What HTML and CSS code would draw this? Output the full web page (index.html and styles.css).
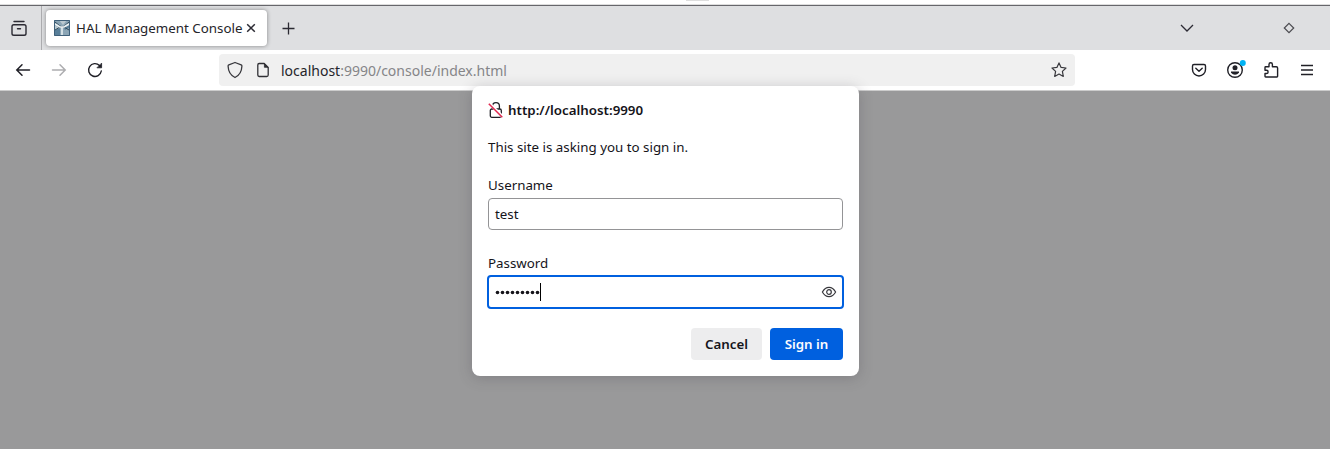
FILE: index.html
```html
<!DOCTYPE html>
<html lang="en">
<head>
<meta charset="utf-8">
<title>HAL Management Console</title>
<link rel="stylesheet" href="styles.css">
</head>
<body>
<div class="desktop"><span class="handle"></span></div>
<header class="tabs">
  <div class="archive">
    <svg width="18" height="18" viewBox="0 0 18 18" fill="none" stroke="#2b2a33" stroke-width="1.4" stroke-linecap="round"><path d="M4 2.5h10M7.5 9.8h3"/><rect x="2" y="5.7" width="14" height="10.6" rx="1.8"/></svg>
  </div>
  <div class="tab">
    <svg class="favicon" width="16" height="16" viewBox="0 0 16 16"><path fill="#8ba5b5" d="M0 0h16v16H0z"/><path fill="#bac8cf" d="M5 0h8L9 5zM0 5l6 3-5 5z"/><path fill="#587f99" d="M1 10l5-2v7H1zM10 8l6-3v2l-5 3z"/><path d="M1 2l5 4 3 1 6-5M1 10l5-3 4 0 5 3" fill="none" stroke="#334b5c"/><path d="M1 4l5 3h4l5-3M8 7v8" fill="none" stroke="#edf3f5" stroke-width="1.5"/><path d="M.5.5h15v15H.5z" fill="none" stroke="#3f607a"/></svg>
    <span class="tab-title">HAL Management Console</span>
    <svg class="close" width="10" height="10" viewBox="0 0 10 10" stroke="#2b2a33" stroke-width="1.5"><path d="M1.2 1.2l7.6 7.6M8.8 1.2L1.2 8.800"/></svg>
  </div>
  <svg class="plus" width="14" height="14" viewBox="0 0 14 14" stroke="#2b2a33" stroke-width="1.3"><path d="M.5 7.500h12M6.500 1.500v12"/></svg>
  <svg class="chevron" width="14" height="14" viewBox="0 0 14 14" fill="none" stroke="#2b2a33" stroke-width="1.3"><path d="M1 4l6 6 6-6"/></svg>
  <svg class="diamond" width="12" height="12" viewBox="0 0 12 12" fill="none" stroke="#4b4b50" stroke-width="1.2"><path d="M6 1.3L10.7 6 6 10.7 1.3 6z"/></svg>
</header>
<nav class="toolbar">
  <svg class="back" width="16" height="16" viewBox="0 0 16 16" fill="none" stroke="#202027" stroke-width="1.5" stroke-linecap="round"><path d="M14.5 8H2M7 2.8L1.8 8 7 13.2"/></svg>
  <svg class="forward" width="16" height="16" viewBox="0 0 16 16" fill="none" stroke="#adadb0" stroke-width="1.5" stroke-linecap="round"><path d="M1.5 8H14M9 2.8L14.2 8 9 13.2"/></svg>
  <svg class="reload" width="16" height="16" viewBox="0 0 16 16" fill="none" stroke="#202027" stroke-width="1.4" stroke-linecap="round"><path d="M14.3 9A6.4 6.4 0 1 1 12.5 3.5"/><path d="M14.6 1.5v4.3h-4.3z" fill="#202027" stroke-width=".8" stroke-linejoin="round"/></svg>
  <div class="urlbar">
    <svg class="shield" width="16" height="18" viewBox="0 0 16 18" fill="none" stroke="#38383d" stroke-width="1.3" stroke-linejoin="round"><path d="M8 1.5l6.2 2.3c.7.3.8.8.7 1.5-.2 5-2.2 9-6.9 11.200C3.300 14.300 1.300 10.300 1.100 5.300 1 4.600 1.100 4.100 1.800 3.800z"/></svg>
    <svg class="page" width="12" height="16" viewBox="0 0 12 16" fill="none" stroke="#303035" stroke-width="1.3" stroke-linejoin="round"><path d="M2.200 1.500h5l4 4v7.500a1.500 1.500 0 0 1-1.500 1.500H2.200A1.500 1.500 0 0 1 .8 13V3a1.500 1.500 0 0 1 1.400-1.500z"/><path d="M7.400 1.700v3.600h3.600z" fill="#303035" stroke-width=".8"/></svg>
    <span class="url">localhost<span class="path">:9990/console/index.html</span></span>
    <svg class="star" width="16" height="16" viewBox="0 0 16 16" fill="none" stroke="#38383d" stroke-width="1.2" stroke-linejoin="round"><path d="M8 .9l2.100 4.500 4.900.6-3.600 3.400.9 5L8 12l-4.300 2.400.9-5L1 6l4.900-.6z"/></svg>
  </div>
  <div class="actions">
    <svg width="16" height="16" viewBox="0 0 16 16" fill="none" stroke="#202027" stroke-width="1.400" stroke-linecap="round" stroke-linejoin="round"><path d="M3 2.500h10c1 0 1.500.5 1.500 1.500v3.500a6.500 6.500 0 0 1-13 0V4c0-1 .5-1.500 1.500-1.500z"/><path d="M4.800 6.300L8 9.300l3.200-3"/></svg>
    <svg class="account" width="22" height="22" viewBox="0 0 22 22"><circle cx="11" cy="11" r="7.300" fill="none" stroke="#202027" stroke-width="1.400"/><circle cx="11" cy="8.800" r="2.500" fill="#202027"/><path d="M7 12.500h8v1.200q-1.800 2.100-4 2.100t-4-2.100z" fill="#202027"/><circle cx="18.800" cy="4" r="3" fill="#00b3f4"/></svg>
    <svg class="extensions" width="16" height="18" viewBox="0 0 16 18" fill="none" stroke="#202027" stroke-width="1.400" stroke-linejoin="round"><path d="M6 5.700V3.500a1.700 1.700 0 0 1 3.400 0v2.200h3.900q1.300 0 1.300 1.300v8.300q0 .7-.7.700H2.700q-.7 0-.7-.7v-2.800h1.500a1.600 1.600 0 0 0 0-3.200H2V6.400q0-.7.7-.7z"/></svg>
    <svg class="menu" width="14" height="14" viewBox="0 0 14 14" stroke="#202027" stroke-width="1.300"><path d="M1 2.500h12M1 7h12M1 11.500h12"/></svg>
  </div>
</nav>
<main class="backdrop"></main>
<form class="dialog">
  <h1 class="origin">
    <svg width="16" height="18" viewBox="0 0 16 18" fill="none"><path d="M4.600 8V5a3.400 3.400 0 0 1 6.800 0v3" stroke="#202027" stroke-width="1.300"/><rect x="2.300" y="8" width="11" height="8.300" rx="1.500" stroke="#202027" stroke-width="1.300"/><path d="M1.800 2.800L14.500 15.500" stroke="#fff" stroke-width="3"/><path d="M.8 2.800L14.300 16.300" stroke="#e22850" stroke-width="1.500"/></svg>
    <span class="host">http://localhost:9990</span>
  </h1>
  <p class="message">This site is asking you to sign in.</p>
  <label class="label">Username</label>
  <div class="field"><span>test</span></div>
  <label class="label">Password</label>
  <div class="field focused">
    <svg class="dots" width="46" height="6" viewBox="0 0 46 6" fill="#15141a"><circle cx="3.500" cy="3.500" r="1.800"/><circle cx="8.500" cy="3.500" r="1.800"/><circle cx="13.500" cy="3.500" r="1.800"/><circle cx="18.500" cy="3.500" r="1.800"/><circle cx="23.500" cy="3.500" r="1.800"/><circle cx="28.500" cy="3.500" r="1.800"/><circle cx="33.500" cy="3.500" r="1.800"/><circle cx="38.500" cy="3.500" r="1.800"/><circle cx="43.500" cy="3.500" r="1.800"/></svg><span class="caret"></span>
    <svg class="eye" width="16" height="12" viewBox="0 0 16 12" fill="none" stroke="#38383d" stroke-width="1.200"><path d="M1.400 6Q4 1.300 8 1.300T14.600 6Q12 10.700 8 10.700T1.400 6z"/><circle cx="8" cy="6" r="2.300"/></svg>
  </div>
  <div class="buttons"><button type="button" class="button">Cancel</button><button type="button" class="button primary">Sign in</button></div>
</form>
</body>
</html>
```
FILE: styles.css
```css
* { box-sizing: border-box; }
body { margin: 0; height: 449px; overflow: hidden; display: flex; flex-direction: column; font-family: "Noto Sans", sans-serif; font-size: 13.33px; color: #15141a; background: #fff; }
svg { display: block; flex: none; }
.desktop { height: 6px; flex: none; display: flex; justify-content: center; border-bottom: 1px solid #66666b; box-shadow: inset 0 -1px #ddd; padding-left: 64px; }
.handle { width: 23px; height: 1px; background: #dedede; }
.tabs { height: 44px; flex: none; display: flex; align-items: center; background: #dedfe1; }
.archive { width: 42px; height: 44px; padding: 13px 0 0 10px; border-right: 1px solid #acacaf; }
.tab { width: 221px; height: 36px; margin-left: 4px; padding: 0 11px 0 8px; display: flex; align-items: center; background: #fff; border-radius: 4px; box-shadow: 0 0 4px rgba(0,0,0,.4); }
.tab-title { margin-left: 6px; font-size: 13.33px; line-height: 20px; white-space: nowrap; color: #25252a; }
.close { margin-left: auto; }
.plus { margin-left: 15px; }
.chevron { margin-left: auto; }
.diamond { margin: 0 35px 0 89px; }
.toolbar { height: 41px; flex: none; display: flex; align-items: center; padding: 0 16px 1px 15px; border-bottom: 1px solid #ccc; background: #fff; }
.forward { margin-left: 20px; }
.reload { margin-left: 20px; }
.urlbar { width: 856px; height: 32px; margin-left: 116px; padding: 0 8px; display: flex; align-items: center; border-radius: 4px; background: #f0f0f0; }
.page { margin-left: 14px; }
.url { margin-left: 12px; padding-top: 2px; font-size: 14px; line-height: 20px; white-space: nowrap; color: #25252a; }
.path { color: #858588; }
.star { margin-left: auto; }
.actions { margin-left: auto; display: flex; align-items: center; }
.account { margin-left: 17px; }
.extensions { margin-left: 17px; }
.menu { margin-left: 21px; }
.backdrop { flex: 1; background: #99999a; }
.dialog { position: absolute; left: 472px; top: 86px; width: 387px; height: 290px; padding: 15px 16px 16px; background: #fff; border-radius: 8px; box-shadow: 0 2px 14px rgba(58,57,68,.25); }
.origin { display: flex; align-items: center; gap: 4px; height: 18px; margin: 0; font-size: 13.33px; font-weight: 600; }
.message { margin: 18px 0 19px; line-height: 20px; }
.label { display: block; height: 18px; line-height: 18px; margin-bottom: 4px; }
.field { height: 32px; margin-bottom: 24px; padding: 0 6px; display: flex; align-items: center; border: 1px solid #949496; border-radius: 4px; }
.focused { margin: -1px -1px 19px; height: 34px; border: 2px solid #0060df; padding: 0 5px; }
.caret { width: 1px; height: 18px; background: #000; }
.eye { margin-left: auto; }
.buttons { display: flex; justify-content: flex-end; gap: 8px; }
.button { width: 71px; height: 32px; padding: 0; border: 0; border-radius: 4px; background: #ededee; color: #15141a; font: 600 13.33px "Noto Sans", sans-serif; }
.primary { width: 73px; background: #0060df; color: #fbfbfe; }
```
